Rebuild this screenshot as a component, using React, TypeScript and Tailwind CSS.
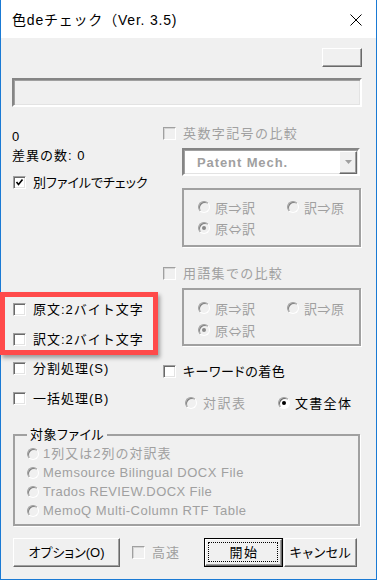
import React from "react";

const FONT = "font-['Liberation_Sans','Noto_Sans_CJK_JP',sans-serif]";

function Check({ checked = false, disabled = false }: { checked?: boolean; disabled?: boolean }) {
  return (
    <span
      className={
        disabled
          ? "relative block w-[13px] h-[13px] shrink-0 border border-t-[#a0a0a0] border-l-[#a0a0a0] border-b-white border-r-white bg-[#f0f0f0] shadow-[inset_1px_1px_0_#d4d4d4]"
          : "relative block w-[13px] h-[13px] shrink-0 border border-t-[#a0a0a0] border-l-[#a0a0a0] border-b-white border-r-white bg-white shadow-[inset_1px_1px_0_#696969,inset_-1px_-1px_0_#e3e3e3]"
      }
    >
      {checked && (
        <svg className="absolute left-[1px] top-[1px]" width="9" height="9" viewBox="0 0 9 9">
          <path d="M1.5 4 L3.5 6.5 L7.5 1.5" fill="none" stroke="#000" strokeWidth="1.6" />
        </svg>
      )}
    </span>
  );
}

function Radio({ checked = false, disabled = false }: { checked?: boolean; disabled?: boolean }) {
  return (
    <span
      className={
        disabled
          ? "relative block w-[12px] h-[12px] shrink-0 rounded-full border border-t-[#a0a0a0] border-l-[#a0a0a0] border-b-white border-r-white bg-[#f0f0f0] shadow-[inset_1px_1px_0_#808080]"
          : "relative block w-[12px] h-[12px] shrink-0 rounded-full border border-t-[#a0a0a0] border-l-[#a0a0a0] border-b-white border-r-white bg-white shadow-[inset_1px_1px_0_#696969]"
      }
    >
      {checked && (
        <span
          className={
            disabled
              ? "absolute left-[3px] top-[3px] w-[4px] h-[4px] rounded-full bg-[#8a8a8a]"
              : "absolute left-[3px] top-[3px] w-[4px] h-[4px] rounded-full bg-black"
          }
        />
      )}
    </span>
  );
}

function Btn({ children, className }: { children?: React.ReactNode; className: string }) {
  return (
    <div
      className={
        "flex items-center justify-center bg-[#f0f0f0] border border-t-white border-l-white border-b-[#696969] border-r-[#696969] shadow-[inset_-1px_-1px_0_#a0a0a0] " +
        className
      }
    >
      {children}
    </div>
  );
}

function GroupRadios({ pt, gap }: { pt: string; gap: string }) {
  return (
    <div className={"flex flex-col " + pt}>
      <div className="flex items-center h-[18px] pl-[14px]">
        <div className="flex items-center gap-[5px] w-[89px]">
          <Radio disabled />
          <span className="text-[#a0a0a0] font-['Noto_Sans_CJK_JP',sans-serif] tracking-[0.5px]">原⇒訳</span>
        </div>
        <div className="flex items-center gap-[5px]">
          <Radio disabled />
          <span className="text-[#a0a0a0] font-['Noto_Sans_CJK_JP',sans-serif] tracking-[0.5px]">訳⇒原</span>
        </div>
      </div>
      <div className={"h-[18px] flex items-center gap-[5px] pl-[14px] " + gap}>
        <Radio disabled checked />
        <span className="text-[#a0a0a0] font-['Noto_Sans_CJK_JP',sans-serif] tracking-[0.5px]">原⇔訳</span>
      </div>
    </div>
  );
}

export default function App() {
  return (
    <div
      className={
        "relative w-[377px] h-[580px] bg-[#f0f0f0] border-x border-b border-[#1a7ad4] flex flex-col text-[13px] leading-none text-black " +
        FONT
      }
    >
      {/* title bar */}
      <div className="h-[38px] bg-white flex items-center justify-between pl-[11px] pr-[14px] shrink-0">
        <span className="text-[14px] tracking-[0.8px] text-black mt-[1px]">色deチェック（Ver. 3.5)</span>
        <svg width="12" height="12" viewBox="0 0 12 12" className="mt-[1px]">
          <path d="M0.5 0.5 L11.5 11.5 M11.5 0.5 L0.5 11.5" stroke="#000" strokeWidth="1" />
        </svg>
      </div>

      <div className="flex-1 flex flex-col pl-[11px] pr-[14px]">
        {/* small button */}
        <div className="flex justify-end mt-[10px]">
          <Btn className="w-[40px] h-[19px]" />
        </div>

        {/* text field */}
        <div className="mt-[11px] h-[29px] border-2 border-t-[#858585] border-l-[#858585] border-b-white border-r-white shadow-[inset_1px_1px_0_#a0a0a0,inset_-1px_-1px_0_#e3e3e3] bg-[#f0f0f0]" />

        {/* columns */}
        <div className="flex mt-[18px]">
          {/* left column */}
          <div className="w-[151px] flex flex-col shrink-0">
            <div className="h-[22px] flex items-center">0</div>
            <div className="h-[16px] flex items-center tracking-[1px]">差異の数: 0</div>
            <div className="mt-[10px] h-[18px] flex items-center gap-[7px] pl-[1px]">
              <Check checked />
              <span className="[font-feature-settings:'palt']">別ファイルでチェック</span>
            </div>
            <div className="mt-[109px] h-[18px] flex items-center gap-[7px] pl-[1px]">
              <Check />
              <span className="tracking-[1px]">原文:2バイト文字</span>
            </div>
            <div className="mt-[12px] h-[18px] flex items-center gap-[7px] pl-[1px]">
              <Check />
              <span className="tracking-[1px]">訳文:2バイト文字</span>
            </div>
            <div className="mt-[11px] h-[18px] flex items-center gap-[7px] pl-[1px]">
              <Check />
              <span className="tracking-[1px]">分割処理(S)</span>
            </div>
            <div className="mt-[12px] h-[18px] flex items-center gap-[7px] pl-[1px]">
              <Check />
              <span className="tracking-[1px]">一括処理(B)</span>
            </div>
          </div>

          {/* right column */}
          <div className="w-[198px] flex flex-col">
            <div className="h-[17px] flex items-center gap-[7px]">
              <Check disabled />
              <span className="text-[#a0a0a0] tracking-[1.4px]">英数字記号の比較</span>
            </div>
            <div className="mt-[6px] ml-[19px] w-[178px] h-[28px] flex items-center border-2 border-t-[#858585] border-l-[#858585] border-b-white border-r-white shadow-[inset_1px_1px_0_#a0a0a0,inset_-1px_-1px_0_#e3e3e3] bg-white">
              <span className="flex-1 pl-[13px] text-[#a0a0a0] font-bold tracking-[0.9px] font-['Liberation_Sans',sans-serif]">
                Patent Mech.
              </span>
              <Btn className="w-[18px] h-[23px] mr-[1px]">
                <svg width="7" height="4" viewBox="0 0 7 4">
                  <path d="M0 0 H7 L3.5 4 Z" fill="#a0a0a0" />
                </svg>
              </Btn>
            </div>
            <div className="mt-[12px] ml-[19px] w-[179px] h-[59px] border-2 border-[#a0a0a0] shadow-[1px_1px_0_#fff]">
              <GroupRadios pt="pt-[8px]" gap="mt-[3px]" />
            </div>

            <div className="mt-[17px] h-[18px] flex items-center gap-[7px]">
              <Check disabled />
              <span className="text-[#a0a0a0] tracking-[1.3px]">用語集での比較</span>
            </div>
            <div className="mt-[6px] ml-[19px] w-[179px] h-[58px] border-2 border-[#a0a0a0] shadow-[1px_1px_0_#fff]">
              <GroupRadios pt="pt-[9px]" gap="mt-[4px]" />
            </div>

            <div className="mt-[16px] h-[18px] flex items-center gap-[7px]">
              <Check />
              <span className="[font-feature-settings:'palt'] tracking-[0.5px]">キーワードの着色</span>
            </div>
            <div className="mt-[14px] h-[18px] flex items-center pl-[22px]">
              <div className="flex items-center gap-[6px] w-[93px]">
                <Radio disabled />
                <span className="text-[#a0a0a0] tracking-[1.5px]">対訳表</span>
              </div>
              <div className="flex items-center gap-[5px]">
                <Radio checked />
                <span className="tracking-[1.3px]">文書全体</span>
              </div>
            </div>
          </div>
        </div>

        {/* target file group */}
        <fieldset className="mt-[15px] ml-[1px] w-[347px] h-[99px] border-2 border-[#a0a0a0] shadow-[1px_1px_0_#fff] pl-[12px] pb-[4px] m-0 min-w-0">
          <legend className="ml-0 px-[3px] h-[16px] leading-[16px] [font-feature-settings:'palt'] tracking-[0.5px]">対象ファイル</legend>
          <div className="flex flex-col pt-[1px]">
            <div className="h-[19px] flex items-center gap-[4px]">
              <Radio disabled />
              <span className="text-[#a0a0a0] tracking-[1px]">1列又は2列の対訳表</span>
            </div>
            <div className="h-[19px] flex items-center gap-[4px]">
              <Radio disabled />
              <span className="text-[#a0a0a0] tracking-[0.5px]">Memsource Bilingual DOCX File</span>
            </div>
            <div className="h-[19px] flex items-center gap-[4px]">
              <Radio disabled />
              <span className="text-[#a0a0a0] tracking-[0.4px]">Trados REVIEW.DOCX File</span>
            </div>
            <div className="h-[19px] flex items-center gap-[4px]">
              <Radio disabled />
              <span className="text-[#a0a0a0] tracking-[0.5px]">MemoQ Multi-Column RTF Table</span>
            </div>
          </div>
        </fieldset>

        {/* buttons */}
        <div className="mt-[12px] flex items-center">
          <Btn className="ml-[1px] w-[107px] h-[29px]">
            <span className="[font-feature-settings:'palt']">オプション(O)</span>
          </Btn>
          <div className="ml-[12px] flex items-center gap-[7px]">
            <Check disabled />
            <span className="text-[#a0a0a0] tracking-[1px]">高速</span>
          </div>
          <div className="relative ml-[24px] w-[79px] h-[29px] border border-black">
            <Btn className="w-full h-full">
              <span className="tracking-[1.5px] pl-[1px]">開始</span>
            </Btn>
            <span className="absolute left-[3px] top-[3px] right-[4px] bottom-[4px] border border-dotted border-black" />
          </div>
          <Btn className="ml-[1px] w-[73px] h-[29px]">
            <span className="[font-feature-settings:'palt'] tracking-[0.5px]">キャンセル</span>
          </Btn>
        </div>
      </div>

      {/* red highlight overlay */}
      <div className="absolute left-[-1px] top-[292px] w-[158px] h-[63px] border-[5px] border-[#ff4a4a] shadow-[2px_3px_4px_rgba(0,0,0,0.35)]" />
    </div>
  );
}
